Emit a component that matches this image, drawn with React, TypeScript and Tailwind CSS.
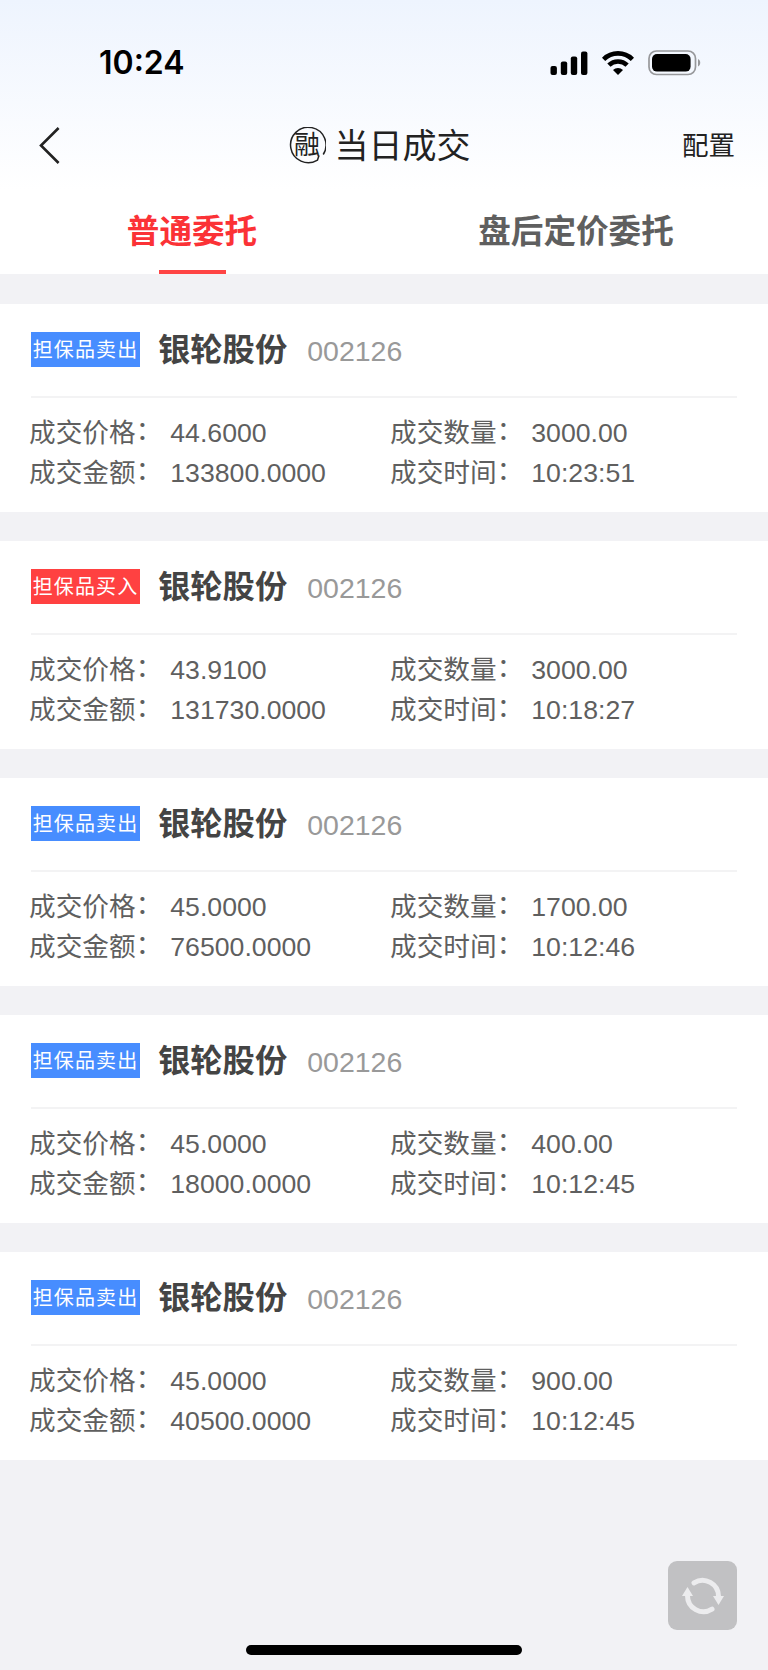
type Trade = {
  side: "buy" | "sell";
  name: string;
  code: string;
  price: string;
  quantity: string;
  amount: string;
  time: string;
};

const trades: Trade[] = [
  { side: "sell", name: "银轮股份", code: "002126", price: "44.6000", quantity: "3000.00", amount: "133800.0000", time: "10:23:51" },
  { side: "buy", name: "银轮股份", code: "002126", price: "43.9100", quantity: "3000.00", amount: "131730.0000", time: "10:18:27" },
  { side: "sell", name: "银轮股份", code: "002126", price: "45.0000", quantity: "1700.00", amount: "76500.0000", time: "10:12:46" },
  { side: "sell", name: "银轮股份", code: "002126", price: "45.0000", quantity: "400.00", amount: "18000.0000", time: "10:12:45" },
  { side: "sell", name: "银轮股份", code: "002126", price: "45.0000", quantity: "900.00", amount: "40500.0000", time: "10:12:45" },
];

function StatusBar() {
  return (
    <div className="flex h-[125px] items-center justify-between pl-[99px] pr-[67px]">
      <span className="pt-px font-['Inter'] text-[32px] font-semibold leading-none text-black">
        10:24
      </span>
      <div className="flex items-center">
        <svg width="38" height="24" viewBox="0 0 38 24">
          <rect x="0.5" y="15" width="6.4" height="9" rx="2" />
          <rect x="10.8" y="10.5" width="6.4" height="13.5" rx="2" />
          <rect x="20.8" y="5.5" width="6.4" height="18.5" rx="2" />
          <rect x="31" y="0.5" width="6.4" height="23.5" rx="2" />
        </svg>
        <svg width="32" height="24" viewBox="0 0 32 24" className="ml-[14px]" fill="none" stroke="#000" strokeWidth="4.6">
          <path d="M1.600 8.300a20.500 20.500 0 0 1 28.800 0" />
          <path d="M6.900 14.200a13 13 0 0 1 18.200 0" />
          <path d="M11 18.900a7.200 7.200 0 0 1 10 0L16 24Z" fill="#000" stroke="none" />
        </svg>
        <svg width="53" height="26" viewBox="0 0 53 26" className="ml-[14px]">
          <rect x="1" y="1" width="46.5" height="23.5" rx="7.5" fill="none" stroke="#97989b" strokeWidth="1.7" />
          <rect x="4" y="4" width="38.6" height="17.6" rx="5" />
          <path d="M50 9v7.5c3-1.600 3-5.900 0-7.500Z" fill="#97989b" />
        </svg>
      </div>
    </div>
  );
}

function TitleBar() {
  return (
    <div className="grid h-[42px] grid-cols-[1fr_auto_1fr] items-center pl-[38px] pr-[33px] text-[#222]">
      <svg width="24" height="38" viewBox="0 0 24 38" className="mb-[2px]" fill="none" stroke="#222" strokeWidth="2.6">
        <path d="M20.600 2 3 19.500 20.600 37" />
      </svg>
      <div className="mr-[14px] flex items-center gap-[9px]">
        <div className="mb-[2px] grid size-[37px] place-items-center">
          <svg width="37" height="37" viewBox="0 0 37 37" className="col-start-1 row-start-1" fill="none" stroke="#222" strokeWidth="1.5">
            <path d="M34.200 27.500A17.700 17.700 0 1 0 28.500 33.100L30 28.500" />
          </svg>
          <span className="col-start-1 row-start-1 text-[26px] leading-none">融</span>
        </div>
        <h1 className="text-[34px] leading-none">当日成交</h1>
      </div>
      <button className="justify-self-end pt-px text-[26.500px] leading-none">配置</button>
    </div>
  );
}

function Tabs() {
  return (
    <div className="grid h-[107px] grid-cols-2 text-[32.600px] font-bold leading-none">
      <button className="flex flex-col items-center justify-between pt-[49px] text-[#fb3236]">
        普通委托
        <span className="h-1 w-[67px] bg-[#ff4444]" />
      </button>
      <button className="flex flex-col items-center pt-[49px] text-[#5f5f5f]">
        盘后定价委托
      </button>
    </div>
  );
}

function Field({ label, value }: { label: string; value: string }) {
  return (
    <p className="flex">
      {label}
      <span className="-mt-[2px] mr-[8px]">：</span>
      {value}
    </p>
  );
}

function TradeCard({ trade }: { trade: Trade }) {
  const isBuy = trade.side === "buy";
  return (
    <section className="h-[208px] bg-white pl-[29px] pr-[31px]">
      <div className="ml-[2px] flex h-[94px] items-center border-b-2 border-[#f3f3f4]">
        <span
          className={`mb-[2px] flex h-[35px] w-[109px] items-center justify-center pt-px text-[20px] leading-none tracking-[1.100px] text-white ${
            isBuy ? "bg-[#ff4141]" : "bg-[#478dff]"
          }`}
        >
          {isBuy ? "担保品买入" : "担保品卖出"}
        </span>
        <h2 className="ml-[18px] text-[32.300px] font-bold leading-none text-[#444]">{trade.name}</h2>
        <span className="ml-5 pt-[2px] text-[28.500px] leading-none text-[#999]">{trade.code}</span>
      </div>
      <div className="grid grid-cols-[361px_1fr] pt-[15px] text-[26.670px] leading-[40px] text-[#5f5f5f]">
        <Field label="成交价格" value={trade.price} />
        <Field label="成交数量" value={trade.quantity} />
        <Field label="成交金额" value={trade.amount} />
        <Field label="成交时间" value={trade.time} />
      </div>
    </section>
  );
}

export default function App() {
  return (
    <div
      lang="zh-CN"
      className="relative flex h-[1670px] w-[768px] flex-col bg-[#f2f2f5] font-['Liberation_Sans','Noto_Sans_CJK_SC',sans-serif]"
    >
      <header className="h-[274px] bg-white bg-linear-to-b from-[#eef4fe] to-white to-[190px]">
        <StatusBar />
        <TitleBar />
        <Tabs />
      </header>
      <main className="mt-[30px] flex flex-col gap-[29px]">
        {trades.map((trade, index) => (
          <TradeCard key={index} trade={trade} />
        ))}
      </main>
      <button className="absolute bottom-[40px] right-[31px] flex size-[69px] items-center justify-center rounded-[9px] bg-[#c1c1c3]">
        <svg width="42" height="38" viewBox="0 0 42 38" fill="none" stroke="#ececee" strokeWidth="5">
          <path d="M12 5.800A16 16 0 0 1 36.500 19.500" strokeLinecap="round" />
          <path d="M30 32.200A16 16 0 0 1 5.500 18.500" strokeLinecap="round" />
          <path d="M31 19h11l-5.500 9Z" fill="#ececee" stroke="none" />
          <path d="M0 19h11L5.500 10Z" fill="#ececee" stroke="none" />
        </svg>
      </button>
      <div className="absolute bottom-[15px] left-[246px] h-[10px] w-[276px] rounded-full bg-black" />
    </div>
  );
}
